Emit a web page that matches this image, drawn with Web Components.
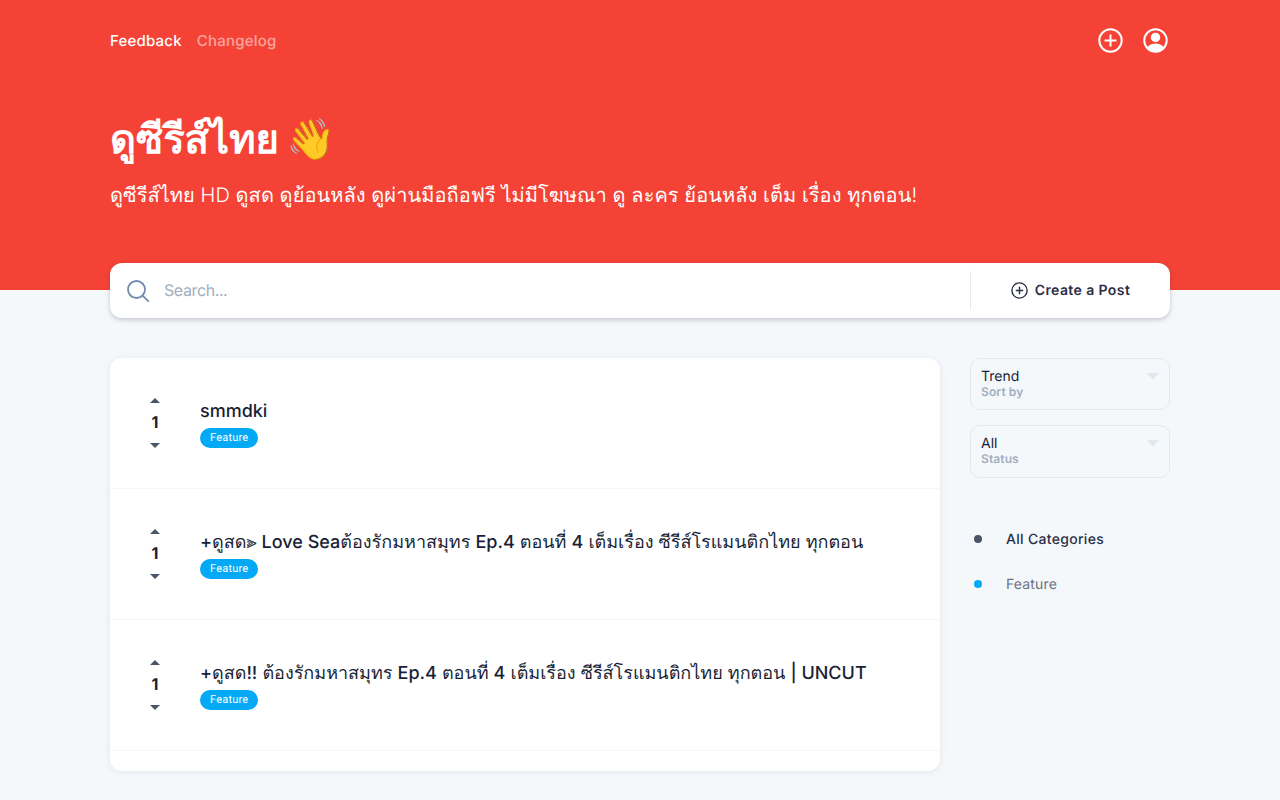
<!DOCTYPE html>
<html lang="th">
<head>
<meta charset="utf-8">
<title>Feedback</title>
<style>
  html, body { margin: 0; height: 100%; }
  body {
    background: #f5f8fb;
    font-family: Inter, "Noto Sans", sans-serif;
    color: #1a1f36;
    overflow: hidden;
    text-rendering: geometricPrecision;
  }
</style>
</head>
<body>
<x-hero
  heading="ดูซีรีส์ไทย 👋"
  tagline="ดูซีรีส์ไทย HD ดูสด ดูย้อนหลัง ดูผ่านมือถือฟรี ไม่มีโฆษณา ดู ละคร ย้อนหลัง เต็ม เรื่อง ทุกตอน!"></x-hero>
<x-search></x-search>
<x-board>
  <x-post votes="1" title="smmdki"></x-post>
  <x-post votes="1" title="+ดูสด⫸ Love Seaต้องรักมหาสมุทร Ep.4 ตอนที่ 4 เต็มเรื่อง ซีรีส์โรแมนติกไทย ทุกตอน"></x-post>
  <x-post votes="1" title="+ดูสด!! ต้องรักมหาสมุทร Ep.4 ตอนที่ 4 เต็มเรื่อง ซีรีส์โรแมนติกไทย ทุกตอน | UNCUT"></x-post>
  <x-filter slot="side" value="Trend" label="Sort by"></x-filter>
  <x-filter slot="side" value="All" label="Status"></x-filter>
  <x-category slot="side" color="#4a5568" active style="margin-top:24px">All Categories</x-category>
  <x-category slot="side" color="#03a9f4">Feature</x-category>
</x-board>

<script>
class xHero extends HTMLElement {
  static css = `
    :host {
      display: block;
      height: 290px;
      background: #f44336;
      color: white;
      box-sizing: border-box;
      padding: 0 110px;
    }
    nav {
      height: 80px;
      display: flex;
      align-items: center;
      font-size: 15px;
      font-weight: 500;
      letter-spacing: .2px;
      gap: 15px;
    }
    nav span:nth-child(2) { opacity: .5; }
    .icons { margin-left: auto; margin-right: 2.5px; display: flex; gap: 20px; }
    svg { display: block; width: 25px; height: 25px; }
    h1 {
      margin: 32px 0 0;
      font-size: 40px;
      line-height: 54px;
      font-weight: 700;
      word-spacing: -2px;
    }
    p {
      margin: 14px 0 0;
      font-size: 20px;
      line-height: 30px;
      font-weight: 300;
      letter-spacing: .06px;
    }
  `;
  constructor() {
    super();
    this.attachShadow({ mode: "open" });
  }
  connectedCallback() {
    this.shadowRoot.innerHTML = `
      <style>${xHero.css}</style>
      <nav>
        <span>Feedback</span>
        <span>Changelog</span>
        <div class="icons">
          <svg viewBox="0 0 25 25" fill="none" stroke="white" stroke-width="2">
            <circle cx="12.5" cy="12.5" r="11.2"/>
            <path d="M12.5 6.5v12M6.5 12.5h12"/>
          </svg>
          <svg viewBox="0 0 25 25">
            <defs><clipPath id="c"><circle cx="12.5" cy="12.5" r="11"/></clipPath></defs>
            <circle cx="12.5" cy="9.4" r="4.7" fill="white"/>
            <ellipse cx="12.5" cy="21.6" rx="8.8" ry="6" fill="white" clip-path="url(#c)"/>
            <circle cx="12.5" cy="12.5" r="11.2" fill="none" stroke="white" stroke-width="2"/>
          </svg>
        </div>
      </nav>
      <h1>${this.getAttribute("heading")}</h1>
      <p>${this.getAttribute("tagline")}</p>
    `;
  }
}

class xSearch extends HTMLElement {
  static css = `
    :host {
      display: flex;
      align-items: center;
      box-sizing: border-box;
      width: 1060px;
      height: 55px;
      margin: -27px 0 0 110px;
      background: white;
      border-radius: 12px;
      box-shadow: 0 2px 5px rgba(50, 60, 80, .25);
      position: relative;
    }
    .glass { width: 24px; height: 24px; margin-left: 16px; flex: none; }
    .ph {
      flex: 1;
      margin: 0 0 2px 14px;
      font-size: 16px;
      letter-spacing: -.4px;
      color: #a0aec0;
    }
    .post {
      width: 199px;
      height: 39px;
      flex: none;
      border-left: 1px solid #e8ebef;
      display: flex;
      align-items: center;
      justify-content: center;
      gap: 7px;
      font-size: 14px;
      font-weight: 600;
      letter-spacing: .4px;
      color: #2a2f45;
    }
    .post svg { width: 17px; height: 17px; }
    .post span { margin-bottom: 1px; }
  `;
  constructor() {
    super();
    this.attachShadow({ mode: "open" });
  }
  connectedCallback() {
    this.shadowRoot.innerHTML = `
      <style>${xSearch.css}</style>
      <svg class="glass" viewBox="0 0 24 24" fill="none" stroke="#718cac" stroke-width="1.8">
        <circle cx="10.5" cy="10.5" r="8.5"/>
        <path d="M16.6 16.6l5.6 5.6" stroke-linecap="round"/>
      </svg>
      <span class="ph">Search...</span>
      <div class="post">
        <svg viewBox="0 0 17 17" fill="none" stroke="#2a2f45" stroke-width="1.4">
          <circle cx="8.5" cy="8.5" r="7.6"/>
          <path d="M8.5 4.8v7.4M4.8 8.5h7.4"/>
        </svg>
        <span>Create a Post</span>
      </div>
    `;
  }
}

class xBoard extends HTMLElement {
  static css = `
    :host {
      display: grid;
      grid-template-columns: 830px 200px;
      gap: 30px;
      margin: 40px 110px 0;
      align-items: start;
    }
    .list {
      background: white;
      border-radius: 12px;
      padding-bottom: 20px;
      box-shadow: 0 1px 6px rgba(50, 60, 80, .1);
    }
    aside { display: flex; flex-direction: column; }
  `;
  constructor() {
    super();
    this.attachShadow({ mode: "open" });
  }
  connectedCallback() {
    this.shadowRoot.innerHTML = `
      <style>${xBoard.css}</style>
      <div class="list"><slot></slot></div>
      <aside><slot name="side"></slot></aside>
    `;
  }
}

class xPost extends HTMLElement {
  static css = `
    :host {
      display: flex;
      align-items: center;
      box-sizing: border-box;
      height: 131px;
      border-bottom: 1px solid #f4f6f8;
    }
    .votes {
      width: 90px;
      flex: none;
      margin-top: -1px;
      display: flex;
      flex-direction: column;
      align-items: center;
      font-size: 16px;
      font-weight: 700;
      line-height: 22px;
      color: #1a1f36;
      gap: 9px;
    }
    .votes span { margin: -1px 0 1px; }
    .up, .down {
      width: 0;
      height: 0;
      border-left: 5px solid transparent;
      border-right: 5px solid transparent;
    }
    .up { border-bottom: 5px solid #4a5568; }
    .down { border-top: 5px solid #4a5568; }
    .title {
      margin-top: 1px;
      font-size: 18px;
      line-height: 24px;
      font-weight: 400;
      color: #1a1f36;
      white-space: nowrap;
    }
    .title b { font-weight: 500; }
    .tag {
      display: block;
      width: fit-content;
      margin-top: 4px;
      padding: 0 10px;
      height: 20px;
      line-height: 20px;
      border-radius: 10px;
      background: #03a9f4;
      color: white;
      font-family: Roboto, sans-serif;
      font-size: 11px;
      letter-spacing: .2px;
    }
  `;
  constructor() {
    super();
    this.attachShadow({ mode: "open" });
  }
  connectedCallback() {
    // thai falls back to a regular weight in the reference, only latin runs are medium
    const title = this.getAttribute("title").replace(/[\x21-\x7e]+( [\x21-\x7e]+)*/g, "<b>$&</b>");
    this.shadowRoot.innerHTML = `
      <style>${xPost.css}</style>
      <div class="votes">
        <div class="up"></div>
        <span>${this.getAttribute("votes")}</span>
        <div class="down"></div>
      </div>
      <div>
        <div class="title">${title}</div>
        <span class="tag">Feature</span>
      </div>
    `;
  }
}

class xFilter extends HTMLElement {
  static css = `
    :host {
      display: block;
      position: relative;
      box-sizing: border-box;
      height: 52.4px;
      margin-bottom: 15px;
      padding: 9px 10px;
      border: 1px solid #e2e8f0;
      border-radius: 10px;
    }
    .value { font-size: 14px; line-height: 18px; color: #1a1f36; }
    .label { font-size: 12px; line-height: 12px; font-weight: 600; letter-spacing: .1px; color: #a0aec0; }
    .arrow {
      position: absolute;
      right: 10px;
      top: 14px;
      width: 0;
      height: 0;
      border-left: 6px solid transparent;
      border-right: 6px solid transparent;
      border-top: 7px solid #e2e8f0;
    }
  `;
  constructor() {
    super();
    this.attachShadow({ mode: "open" });
  }
  connectedCallback() {
    this.shadowRoot.innerHTML = `
      <style>${xFilter.css}</style>
      <div class="value">${this.getAttribute("value")}</div>
      <div class="label">${this.getAttribute("label")}</div>
      <div class="arrow"></div>
    `;
  }
}

class xCategory extends HTMLElement {
  static css = `
    :host {
      display: flex;
      align-items: center;
      height: 45px;
      font-size: 14px;
      letter-spacing: .15px;
      color: #6b7280;
    }
    :host([active]) { color: #2a2f45; font-weight: 500; letter-spacing: .3px; }
    i {
      width: 8px;
      height: 8px;
      border-radius: 50%;
      margin: 0 24px 0 4px;
      background: var(--dot);
    }
  `;
  constructor() {
    super();
    this.attachShadow({ mode: "open" });
  }
  connectedCallback() {
    this.shadowRoot.innerHTML = `
      <style>${xCategory.css}</style>
      <i style="--dot:${this.getAttribute("color")}"></i>
      <slot></slot>
    `;
  }
}

customElements.define("x-hero", xHero);
customElements.define("x-search", xSearch);
customElements.define("x-board", xBoard);
customElements.define("x-post", xPost);
customElements.define("x-filter", xFilter);
customElements.define("x-category", xCategory);
</script>
</body>
</html>
